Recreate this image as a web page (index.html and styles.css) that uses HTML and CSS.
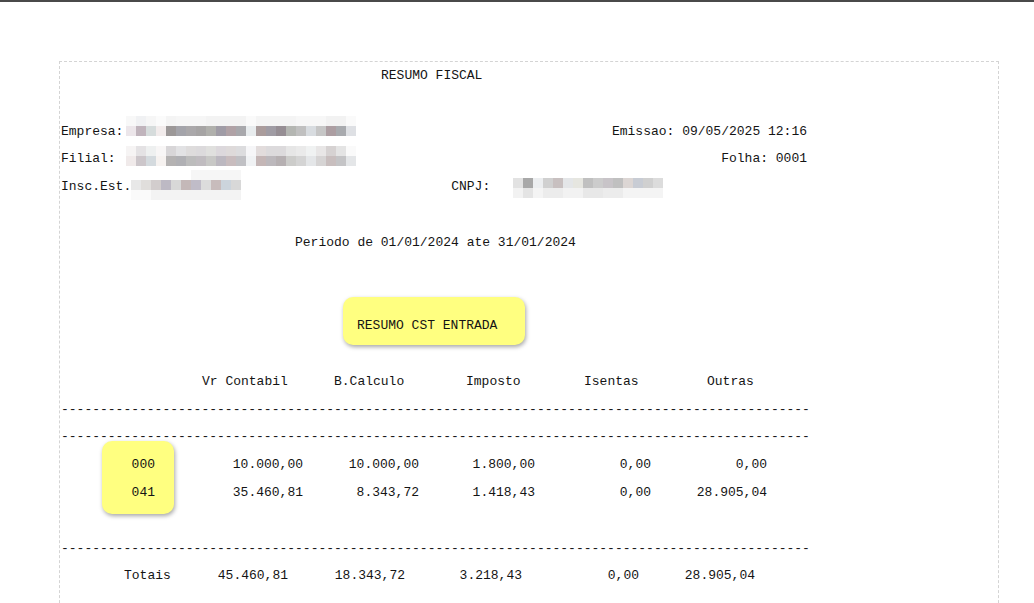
FILE: index.html
```html
<!DOCTYPE html>
<html lang="pt-BR">
<head>
  <meta charset="UTF-8">
  <meta name="viewport" content="width=device-width, initial-scale=1.0">
  <title>Resumo Fiscal</title>
  <link rel="stylesheet" href="styles.css">
</head>
<body>
  <div class="topbar"></div>
  <div class="sheet">
    <div class="line title">RESUMO FISCAL</div>
    <div class="line"></div>
    <div class="line info">
      <span>Empresa:</span><span class="blur blur-empresa"></span><span class="push">Emissao: 09/05/2025 12:16</span>
    </div>
    <div class="line info">
      <span>Filial:</span><span class="blur blur-filial"></span><span class="push">Folha: 0001</span>
    </div>
    <div class="line info">
      <span>Insc.Est.</span><span class="blur blur-insc"></span><span class="cnpj">CNPJ:</span><span class="blur blur-cnpj"></span>
    </div>
    <div class="line"></div>
    <div class="line periodo">Periodo de 01/01/2024 ate 31/01/2024</div>
    <div class="line"></div>
    <div class="line"></div>
    <div class="line section"><span class="mark">RESUMO CST ENTRADA</span></div>
    <div class="line"></div>
    <div class="line cols-head">
      <span>Vr Contabil</span><span>B.Calculo</span><span>Imposto</span><span>Isentas</span><span>Outras</span>
    </div>
    <div class="line">------------------------------------------------------------------------------------------------</div>
    <div class="line">------------------------------------------------------------------------------------------------</div>
    <div class="cst-rows">
      <div class="codes">
        <div class="line">000</div>
        <div class="line">041</div>
      </div>
      <div class="values">
        <span>10.000,00</span><span>10.000,00</span><span>1.800,00</span><span>0,00</span><span>0,00</span>
        <span>35.460,81</span><span>8.343,72</span><span>1.418,43</span><span>0,00</span><span>28.905,04</span>
      </div>
    </div>
    <div class="line"></div>
    <div class="line">------------------------------------------------------------------------------------------------</div>
    <div class="line totals">
      <span>Totais</span><span>45.460,81</span><span>18.343,72</span><span>3.218,43</span><span>0,00</span><span>28.905,04</span>
    </div>
    <div class="line"></div>
  </div>
</body>
</html>
```

FILE: styles.css
```css
body {
  margin: 0;
  background: #fff;
  color: #141414;
  font-family: "Courier New", "Nimbus Mono PS", "Liberation Mono", monospace;
  font-size: 13px;
}

.topbar {
  height: 2px;
  background-color: #4a4a4a;
}

.sheet {
  margin: 59px 0 0 59px;
  width: 940px;
  padding: 0 0 40px 1px;
  box-sizing: border-box;
  border: 1px dashed #d4d4d4;
  border-bottom: none;
}

.line {
  height: 27.8px;
  line-height: 27.8px;
  white-space: pre;
}

.title {
  padding-left: 320px;
}

.periodo {
  padding-left: 234px;
}

.info {
  display: flex;
  width: 746px;
}

.push {
  margin-left: auto;
}

.cnpj {
  margin-left: 210px;
}

/* pixelated (censored) fields */
.blur {
  display: block;
  filter: blur(0.6px);
  background-repeat: no-repeat;
}

.blur-empresa,
.blur-filial {
  width: 230px;
  height: 20px;
  background-size: 100% 10px;
  background-position: 0 0, 0 10px;
}

.blur-empresa {
  margin: -2px 0 0 3px;
  background-image:
    linear-gradient(to right, #f8f8f8 0 10px, #f0f1f3 10px 20px, #f6f6f6 20px 30px, #fbfbfb 30px 40px, #f4f4f4 40px 50px, #f6f6f6 50px 80px, #f3f3f3 80px 120px, #fafafa 120px 130px, #f4f4f4 130px 170px, #f7f7f7 170px 200px, #f2f2f2 200px 220px, #fafafa 220px 230px),
    linear-gradient(to right, #ece6ea 0 10px, #c0b4bc 10px 20px, #d6dcdc 20px 30px, #f2ecec 30px 40px, #9c9898 40px 50px, #a4a4aa 50px 60px, #aaa8aa 60px 70px, #a6a4a4 70px 80px, #b0b0ac 80px 90px, #a09ca6 90px 100px, #b0a2a6 100px 110px, #a8a8ac 110px 120px, #e8ecee 120px 130px, #aa9c9c 130px 140px, #a09ca4 140px 150px, #968e94 150px 160px, #b4b6b2 160px 170px, #c0c0c0 170px 180px, #d8dce0 180px 190px, #c6c6c6 190px 200px, #ac9ea2 200px 210px, #a8aaae 210px 220px, #dee0e4 220px 230px);
}

.blur-filial {
  margin: 1px 0 0 10px;
  background-image:
    linear-gradient(to right, #f6f4f4 0 10px, #e4e2e4 10px 20px, #eef0f0 20px 30px, #f8f6f6 30px 40px, #d8d6d8 40px 50px, #e2e2e4 50px 60px, #dedcdc 60px 70px, #dcdadc 70px 80px, #e0e0de 80px 90px, #dcd8dc 90px 100px, #dedada 100px 110px, #dcdcde 110px 120px, #f6f6f8 120px 130px, #e2dcdc 130px 140px, #dcdadc 140px 160px, #e6e6e6 160px 170px, #eaeaea 170px 180px, #f0f2f2 180px 190px, #e8e6e6 190px 200px, #d6d2d2 200px 210px, #e4e4e4 210px 220px, #fafafa 220px 230px),
    linear-gradient(to right, #f0eaea 0 10px, #ccc6ca 10px 20px, #d4dade 20px 30px, #f6f2f0 30px 40px, #b4b2b2 40px 50px, #b0b0b4 50px 60px, #bcbcbc 60px 70px, #c0bcc0 70px 80px, #c8c8c6 80px 90px, #bcb8c0 90px 100px, #c8bcbe 100px 110px, #c0c0c4 110px 120px, #f0f2f4 120px 130px, #c4b6b6 130px 140px, #bcb8bc 140px 150px, #b6b0b2 150px 160px, #ccccca 160px 170px, #d4d4d4 170px 180px, #e4e6e8 180px 190px, #d6d4d4 190px 200px, #c8bebe 200px 210px, #c4c4c6 210px 220px, #e4e6e8 220px 230px);
}

.blur-insc {
  width: 110px;
  height: 30px;
  margin-top: -3px;
  background-size: 100% 10px;
  background-position: 0 0, 0 10px, 0 20px;
  background-image:
    linear-gradient(to right, #fff 0 60px, #f6f6f6 60px 110px),
    linear-gradient(to right, #e8e8e8 0 10px, #e0dedc 10px 20px, #d2cdcd 20px 30px, #bdb9c4 30px 40px, #d8d8d8 40px 50px, #c4b8b8 50px 60px, #c0bcc8 60px 70px, #dcdcdc 70px 80px, #c8bcbc 80px 90px, #ccd4dc 90px 100px, #d8d8d8 100px 110px),
    linear-gradient(to right, #fafafa 0 20px, #f3f3f3 20px 110px);
}

.blur-cnpj {
  width: 150px;
  height: 20px;
  margin: 5px 0 0 23px;
  background-size: 100% 10px;
  background-position: 0 0, 0 10px;
  background-image:
    linear-gradient(to right, #e2e2e2 0 10px, #a8a8a8 10px 20px, #eceef0 20px 30px, #d0d0d0 30px 40px, #c8c0c0 40px 50px, #e4e6e8 50px 60px, #e6e6e0 60px 70px, #c0c0c0 70px 80px, #cccccc 80px 90px, #c8c4c8 90px 100px, #c0c0c0 100px 110px, #dcd6d4 110px 120px, #c8ccd4 120px 130px, #d0d0d0 130px 140px, #dcdcdc 140px 150px),
    linear-gradient(to right, #f2f2f2 0 10px, #e4e4e4 10px 20px, #f4f4f4 20px 30px, #ececec 30px 50px, #f2f2f2 50px 70px, #e8e8e8 70px 90px, #ececec 90px 110px, #f4f4f4 110px 150px);
}

.section {
  padding-left: 296px;
}

.mark {
  display: inline-block;
  padding: 15px 28px 5px 14px;
  margin: -15px -28px -5px -14px;
  background-color: #ffff80;
  border-radius: 10px;
  box-shadow: 1px 2px 4px rgba(0, 0, 0, 0.35);
}

.cols-head {
  display: grid;
  grid-template-columns: 132px 132px 118px 123px auto;
  padding-left: 141px;
}

.cst-rows {
  display: flex;
  align-items: flex-start;
}

.codes {
  width: 53px;
  margin: -10px 0 -7px 41px;
  padding: 10px 19px 7px 0;
  text-align: right;
  background-color: #ffff80;
  border-radius: 10px;
  box-shadow: 1px 2px 4px rgba(0, 0, 0, 0.35);
}

.values {
  display: grid;
  grid-template-columns: 148px repeat(4, 116px);
  grid-auto-rows: 27.8px;
  line-height: 27.8px;
  margin-left: -19px;
  text-align: right;
  white-space: pre;
}

.totals {
  display: grid;
  grid-template-columns: 47px repeat(3, 117px) 117px 116px;
  padding-left: 63px;
  text-align: right;
}

.totals span:first-child {
  text-align: left;
}
```
